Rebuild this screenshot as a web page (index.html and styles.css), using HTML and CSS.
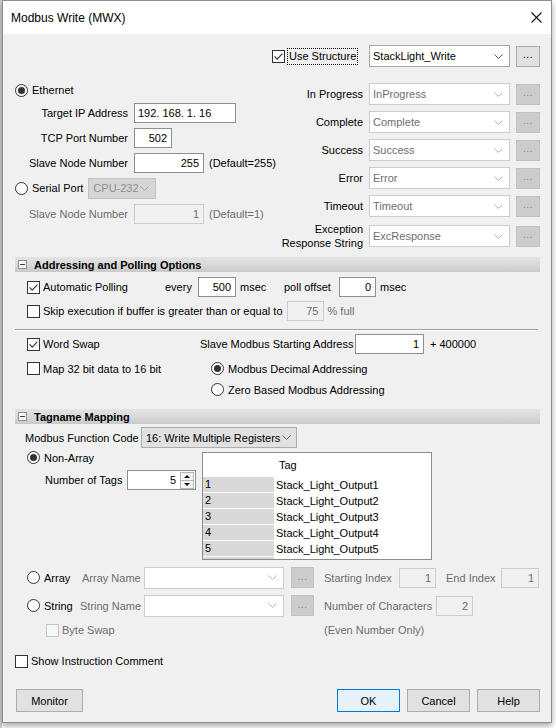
FILE: index.html
```html
<!DOCTYPE html>
<html>
<head>
<meta charset="utf-8">
<title>Modbus Write (MWX)</title>
<link rel="stylesheet" href="styles.css">
</head>
<body>
<div class="screen">
  <div class="window">
    <div class="titlebar">
      <span class="title">Modbus Write (MWX)</span>
      <svg class="close" width="11" height="11" viewBox="0 0 11 11"><path d="M0.5 0.5 L10.5 10.5 M10.5 0.5 L0.5 10.5" stroke="#111" stroke-width="1.1" fill="none"/></svg>
    </div>

    <div class="body">
      <!-- Use structure -->
      <div class="row use-row">
        <svg class="cb use-cb" width="13" height="13" viewBox="0 0 13 13"><rect x="0.5" y="0.5" width="12" height="12" fill="#fff" stroke="#333"/><path d="M2.6 6.4 5.2 9.1 10.4 3.6" fill="none" stroke="#333" stroke-width="1.1"/></svg>
        <span class="focus">Use Structure</span>
        <div class="combo en st push-right"><span>StackLight_Write</span><svg class="chev" width="9" height="5" viewBox="0 0 9 5"><path d="M0.5 0.5 4.5 4.5 8.5 0.5" fill="none" stroke="currentColor"/></svg></div>
        <div class="dots en">...</div>
      </div>

      <div class="cols">
        <div class="left">
          <div class="row eth">
            <svg class="rb" width="13" height="13" viewBox="0 0 13 13"><circle cx="6.5" cy="6.5" r="6" fill="#fff" stroke="#333"/><circle cx="6.5" cy="6.5" r="3.5" fill="#333"/></svg>
            <span class="rl">Ethernet</span>
          </div>
          <div class="row fld ip-row"><span class="lab">Target IP Address</span><div class="tb w102 la">192<i>.</i>168<i>.</i>1<i>.</i>16</div></div>
          <div class="row fld g5"><span class="lab">TCP Port Number</span><div class="tb w38">502</div></div>
          <div class="row fld g5"><span class="lab">Slave Node Number</span><div class="tb w70">255</div><span class="after">(Default=255)</span></div>
          <div class="row serial">
            <svg class="rb" width="13" height="13" viewBox="0 0 13 13"><circle cx="6.5" cy="6.5" r="6" fill="#fff" stroke="#333"/></svg>
            <span class="rl">Serial Port</span>
            <div class="dd dis w68"><span>CPU-232</span><svg class="chev" width="9" height="5" viewBox="0 0 9 5"><path d="M0.5 0.5 4.5 4.5 8.5 0.5" fill="none" stroke="currentColor"/></svg></div>
          </div>
          <div class="row fld g5 dim slave2"><span class="lab">Slave Node Number</span><div class="tb dis w70">1</div><span class="after">(Default=1)</span></div>
        </div>

        <div class="right">
          <div class="row st-row first"><span class="slab"><span>In Progress</span></span><div class="combo dis st"><span>InProgress</span><svg class="chev" width="9" height="5" viewBox="0 0 9 5"><path d="M0.5 0.5 4.5 4.5 8.5 0.5" fill="none" stroke="currentColor"/></svg></div><div class="dots dis">...</div></div>
          <div class="row st-row"><span class="slab"><span>Complete</span></span><div class="combo dis st"><span>Complete</span><svg class="chev" width="9" height="5" viewBox="0 0 9 5"><path d="M0.5 0.5 4.5 4.5 8.5 0.5" fill="none" stroke="currentColor"/></svg></div><div class="dots dis">...</div></div>
          <div class="row st-row"><span class="slab"><span>Success</span></span><div class="combo dis st"><span>Success</span><svg class="chev" width="9" height="5" viewBox="0 0 9 5"><path d="M0.5 0.5 4.5 4.5 8.5 0.5" fill="none" stroke="currentColor"/></svg></div><div class="dots dis">...</div></div>
          <div class="row st-row"><span class="slab"><span>Error</span></span><div class="combo dis st"><span>Error</span><svg class="chev" width="9" height="5" viewBox="0 0 9 5"><path d="M0.5 0.5 4.5 4.5 8.5 0.5" fill="none" stroke="currentColor"/></svg></div><div class="dots dis">...</div></div>
          <div class="row st-row"><span class="slab"><span>Timeout</span></span><div class="combo dis st"><span>Timeout</span><svg class="chev" width="9" height="5" viewBox="0 0 9 5"><path d="M0.5 0.5 4.5 4.5 8.5 0.5" fill="none" stroke="currentColor"/></svg></div><div class="dots dis">...</div></div>
          <div class="row st-row exc"><span class="slab"><span class="two">Exception<br>Response String</span></span><div class="combo dis st"><span>ExcResponse</span><svg class="chev" width="9" height="5" viewBox="0 0 9 5"><path d="M0.5 0.5 4.5 4.5 8.5 0.5" fill="none" stroke="currentColor"/></svg></div><div class="dots dis">...</div></div>
        </div>
      </div>

      <!-- Addressing and Polling -->
      <div class="group-h h-addr"><span class="minus"></span><b>Addressing and Polling Options</b></div>

      <div class="row r20 poll">
        <svg class="cb ind" width="13" height="13" viewBox="0 0 13 13"><rect x="0.5" y="0.5" width="12" height="12" fill="#fff" stroke="#333"/><path d="M2.6 6.4 5.2 9.1 10.4 3.6" fill="none" stroke="#333" stroke-width="1.1"/></svg>
        <span class="cl w-ap">Automatic Polling</span>
        <span class="w-every">every</span>
        <div class="tb w38">500</div>
        <span class="ms">msec</span>
        <span class="w-po">poll offset</span>
        <div class="tb w37">0</div>
        <span class="ms2">msec</span>
      </div>
      <div class="row r20 skip">
        <svg class="cb ind" width="13" height="13" viewBox="0 0 13 13"><rect x="0.5" y="0.5" width="12" height="12" fill="#fff" stroke="#333"/></svg>
        <span class="cl">Skip execution if buffer is greater than or equal to</span>
        <div class="tb dis w37 buf">75</div>
        <span class="pct dimtxt">% full</span>
      </div>

      <div class="sep"></div>

      <div class="row r20 word">
        <svg class="cb ind" width="13" height="13" viewBox="0 0 13 13"><rect x="0.5" y="0.5" width="12" height="12" fill="#fff" stroke="#333"/><path d="M2.6 6.4 5.2 9.1 10.4 3.6" fill="none" stroke="#333" stroke-width="1.1"/></svg>
        <span class="cl w-ws">Word Swap</span>
        <span class="w-sm">Slave Modbus Starting Address</span>
        <div class="tb w69">1</div>
        <span class="plus">+ 400000</span>
      </div>
      <div class="addr-grid">
        <div class="row r21">
          <svg class="cb ind" width="13" height="13" viewBox="0 0 13 13"><rect x="0.5" y="0.5" width="12" height="12" fill="#fff" stroke="#333"/></svg>
          <span class="cl">Map 32 bit data to 16 bit</span>
        </div>
        <div class="radios">
          <div class="row r21">
            <svg class="rb" width="13" height="13" viewBox="0 0 13 13"><circle cx="6.5" cy="6.5" r="6" fill="#fff" stroke="#333"/><circle cx="6.5" cy="6.5" r="3.5" fill="#333"/></svg>
            <span class="rl">Modbus Decimal Addressing</span>
          </div>
          <div class="row r21">
            <svg class="rb" width="13" height="13" viewBox="0 0 13 13"><circle cx="6.5" cy="6.5" r="6" fill="#fff" stroke="#333"/></svg>
            <span class="rl">Zero Based Modbus Addressing</span>
          </div>
        </div>
      </div>

      <!-- Tagname Mapping -->
      <div class="group-h h-tag"><span class="minus"></span><b>Tagname Mapping</b></div>

      <div class="row fcode">
        <span class="fc-lab">Modbus Function Code</span>
        <div class="dd en w156"><span>16: Write Multiple Registers</span><svg class="chev" width="9" height="5" viewBox="0 0 9 5"><path d="M0.5 0.5 4.5 4.5 8.5 0.5" fill="none" stroke="currentColor"/></svg></div>
      </div>

      <div class="tag-area">
        <div class="tag-left">
          <div class="row nonarr">
            <svg class="rb ind" width="13" height="13" viewBox="0 0 13 13"><circle cx="6.5" cy="6.5" r="6" fill="#fff" stroke="#333"/><circle cx="6.5" cy="6.5" r="3.5" fill="#333"/></svg>
            <span class="rl">Non-Array</span>
          </div>
          <div class="row r20 ntags">
            <span class="nt-lab">Number of Tags</span>
            <div class="spin"><span class="val">5</span>
              <svg class="arrows" width="14" height="17" viewBox="0 0 14 17"><rect x="0.5" y="0.5" width="13" height="16" fill="#f4f4f4" stroke="#b5b5b5"/><line x1="0.5" y1="8.5" x2="13.5" y2="8.5" stroke="#b5b5b5"/><path d="M4 6 7 3 10 6Z" fill="#111"/><path d="M4 11 7 14 10 11Z" fill="#111"/></svg>
            </div>
          </div>
        </div>
        <div class="tagtable">
          <div class="th"><div class="c1"></div><div class="c2">Tag</div></div>
          <div class="tr"><div class="c1">1</div><div class="c2">Stack_Light_Output1</div></div>
          <div class="tr"><div class="c1">2</div><div class="c2">Stack_Light_Output2</div></div>
          <div class="tr"><div class="c1">3</div><div class="c2">Stack_Light_Output3</div></div>
          <div class="tr"><div class="c1">4</div><div class="c2">Stack_Light_Output4</div></div>
          <div class="tr"><div class="c1">5</div><div class="c2">Stack_Light_Output5</div></div>
          <div class="tail"><div class="c1"></div><div class="c2"></div></div>
        </div>
      </div>

      <div class="row r21 arr">
        <svg class="rb ind" width="13" height="13" viewBox="0 0 13 13"><circle cx="6.5" cy="6.5" r="6" fill="#fff" stroke="#333"/></svg>
        <span class="rl w-arr">Array</span>
        <span class="dimtxt w-an">Array Name</span>
        <div class="combo dis w140"><span></span><svg class="chev" width="9" height="5" viewBox="0 0 9 5"><path d="M0.5 0.5 4.5 4.5 8.5 0.5" fill="none" stroke="currentColor"/></svg></div>
        <div class="dots dis sm">...</div>
        <span class="dimtxt w-si">Starting Index</span>
        <div class="tb dis w37">1</div>
        <span class="dimtxt w-ei">End Index</span>
        <div class="tb dis w38">1</div>
      </div>
      <div class="row r21 str">
        <svg class="rb ind" width="13" height="13" viewBox="0 0 13 13"><circle cx="6.5" cy="6.5" r="6" fill="#fff" stroke="#333"/></svg>
        <span class="rl w-str">String</span>
        <span class="dimtxt w-sn">String Name</span>
        <div class="combo dis w140"><span></span><svg class="chev" width="9" height="5" viewBox="0 0 9 5"><path d="M0.5 0.5 4.5 4.5 8.5 0.5" fill="none" stroke="currentColor"/></svg></div>
        <div class="dots dis sm">...</div>
        <span class="dimtxt w-nc">Number of Characters</span>
        <div class="tb dis w37">2</div>
      </div>
      <div class="row r16 byte">
        <div class="bs-block">
          <svg class="cb" width="13" height="13" viewBox="0 0 13 13"><rect x="0.5" y="0.5" width="12" height="12" fill="#f7f7f7" stroke="#c4c4c4"/></svg>
          <span class="cl dimtxt">Byte Swap</span>
        </div>
        <span class="dimtxt">(Even Number Only)</span>
      </div>

      <div class="row r16 showc">
        <svg class="cb" width="13" height="13" viewBox="0 0 13 13"><rect x="0.5" y="0.5" width="12" height="12" fill="#fff" stroke="#333"/></svg>
        <span class="cl">Show Instruction Comment</span>
      </div>

      <div class="row btns">
        <div class="btn monitor">Monitor</div>
        <div class="btn ok">OK</div>
        <div class="btn">Cancel</div>
        <div class="btn">Help</div>
      </div>
    </div>
  </div>
</div>
</body>
</html>
```
FILE: styles.css
```css
* { box-sizing: border-box; }
html, body { margin: 0; padding: 0; }
body {
  width: 556px; height: 728px; overflow: hidden;
  background: #fff;
  font-family: "Liberation Sans", Arial, sans-serif;
  font-size: 11px; color: #000;
}
.screen {
  height: 728px;
  background: linear-gradient(to right, #cfcfcf 0, #cfcfcf 2px, #fff 2px);
}
.window {
  margin-left: 2px;
  width: 550px; height: 723px;
  border: 1px solid #8e8e8e;
  background: #f0f0f0;
  box-shadow: 0 3px 6px rgba(0,0,0,.35);
  display: flex; flex-direction: column;
}
.titlebar {
  flex: none; height: 33px; background: #fff;
  display: flex; align-items: center;
  padding: 0 9px 0 8px;
}
.title { font-size: 12px; }
.close { margin-left: auto; display: block; }

.body { padding: 11px 11px 0 12px; }

.row { display: flex; align-items: center; white-space: nowrap; }
.cb, .rb { display: block; flex: none; }
.ind { margin-left: 12px; }
.cl { margin-left: 3px; }
.rl { margin-left: 4px; }
.dimtxt, .dim { color: #6d6d6d; }

/* controls */
.tb {
  height: 20px; background: #fff; border: 1px solid #8f8f8f;
  display: flex; align-items: center; justify-content: flex-end;
  padding: 0 4px; flex: none;
}
.tb.la { justify-content: flex-start; padding-left: 3px; }
.tb i { font-style: normal; margin-right: 3px; }
.tb.dis { background: #f0f0f0; border-color: #cccccc; color: #6d6d6d; }
.w102 { width: 102px; } .w38 { width: 38px; } .w37 { width: 37px; }
.w70 { width: 70px; } .w69 { width: 69px; } .w68 { width: 68px; }
.w140 { width: 140px; } .w156 { width: 156px; }

.combo, .dd {
  height: 22px; display: flex; align-items: center; justify-content: space-between;
  padding: 0 6px 0 3px; border: 1px solid #a9a9a9; background: #fff; flex: none;
}
.combo.en { color: #000; }
.combo.en .chev { color: #5a5a5a; }
.combo.dis { border-color: #cccccc; color: #6d6d6d; }
.combo.dis .chev { color: #b4b4b4; }
.chev { display: block; flex: none; }
.st { width: 141px; }
.push-right { margin-left: auto; }
.dd { height: 21px; }
.dd.en { background: #e1e1e1; border-color: #adadad; padding: 0 5px 0 4px; }
.dd.en .chev { color: #6a6a6a; }
.dd.dis { background: #d6d6d6; border-color: #c4c4c4; color: #8f8f8f; padding: 0 6px 0 4px; margin-left: 5px; }
.dd.dis .chev { color: #a8a8a8; }

.dots {
  width: 24px; height: 21px; margin-left: 6px; flex: none;
  display: flex; align-items: center; justify-content: center;
  padding-bottom: 3px; font-size: 10px; letter-spacing: 0.5px;
}
.dots.en { background: #e1e1e1; border: 1px solid #adadad; color: #000; }
.dots.dis { background: #cccccc; border: 1px solid #c2c2c2; color: #8a8a8a; }
.dots.sm { width: 23px; height: 21px; margin-left: 7px; }

/* use structure */
.use-row { height: 22px; }
.use-cb { margin-left: 257px; }
.focus { margin-left: 2px; border: 1px dotted #000; padding: 1px 1px; line-height: 13px; }

/* top columns */
.cols { display: flex; margin-top: 12px; }
.left { width: 275px; flex: none; }
.right { width: 250px; flex: none; }
.eth { height: 22px; }
.fld { height: 20px; }
.ip-row { margin-top: 2px; }
.g5 { margin-top: 5px; }
.lab { width: 113px; text-align: right; margin-right: 6px; flex: none; }
.after { margin-left: 5px; }
.serial { height: 22px; margin-top: 4px; }
.slave2 { margin-top: 5px; }

.st-row { height: 22px; margin-top: 6px; }
.st-row.first { margin-top: 4px; }
.st-row.exc { height: 28px; margin-top: 5px; }
.slab { width: 73px; margin-right: 6px; flex: none; display: flex; justify-content: flex-end; }
.slab .two { text-align: right; line-height: 14px; }

/* group headers */
.group-h {
  height: 15px; display: flex; align-items: center;
  background: linear-gradient(to bottom, #e4e4e4 0%, #d6d6d6 60%, #c9c9c9 100%);
  padding-left: 3px; width: 525px;
}
.group-h b { margin-left: 7px; font-weight: bold; }
.minus {
  width: 9px; height: 9px; border: 1px solid #8f8f8f; background: #f8f8f8;
  display: flex; align-items: center; justify-content: center; flex: none;
}
.minus::after { content: ""; width: 5px; height: 1px; background: #444; }
.h-addr { margin-top: 7px; }
.h-tag { margin-top: 9px; }

.r20 { height: 20px; }
.r21 { height: 21px; }
.r16 { height: 16px; }
.poll { margin-top: 5px; }
.w-ap { width: 122px; }
.w-every { width: 33px; }
.ms { margin-left: 4px; width: 44px; }
.w-po { width: 55px; }
.ms2 { margin-left: 4px; }
.skip { margin-top: 4px; }
.buf { margin-left: 4px; }
.pct { margin-left: 4px; }

.sep { margin-top: 8px; width: 523px; height: 2px; border-top: 1px solid #a0a0a0; border-bottom: 1px solid #fff; }

.word { margin-top: 3px; }
.w-ws { width: 157px; }
.w-sm { width: 155px; }
.plus { margin-left: 6px; }

.addr-grid { display: flex; margin-top: 4px; }
.addr-grid > .row { width: 196px; flex: none; align-self: flex-start; }
.radios { display: flex; flex-direction: column; }

.fcode { height: 21px; margin-top: 3px; }
.fc-lab { margin-left: 10px; width: 116px; }

.tag-area { display: flex; margin-top: 3px; }
.tag-left { width: 187px; flex: none; }
.nonarr { height: 13px; }
.ntags { margin-top: 6px; }
.nt-lab { margin-left: 30px; width: 82px; }
.spin {
  width: 69px; height: 20px; background: #fff; border: 1px solid #8f8f8f;
  display: flex; align-items: center; justify-content: flex-end; padding-right: 1px;
}
.spin .val { margin-right: 4px; }
.arrows { display: block; }

.tagtable {
  margin-top: 1px; width: 230px; height: 108px;
  border: 1px solid #8c8c8c; background: #fff;
  display: flex; flex-direction: column;
}
.th, .tr, .tail { display: flex; }
.th { height: 24px; align-items: center; }
.th .c2 { padding-left: 5px; }
.c1 { width: 71px; flex: none; padding-left: 2px; }
.c2 { flex: 1; padding-left: 2px; }
.tr { height: 16px; }
.tr .c1 { background: #d8d8d8; border-bottom: 1px solid #fff; line-height: 15px; }
.tr .c2 { line-height: 16px; }
.tail { flex: 1; }
.tail .c1 { background: #d8d8d8; }

.arr { margin-top: 7px; }
.w-arr { width: 38px; }
.w-an { width: 62px; }
.w-si { margin-left: 10px; width: 75px; }
.w-ei { margin-left: 10px; width: 55px; }
.str { margin-top: 7px; }
.w-str { width: 36px; }
.w-sn { width: 64px; }
.w-nc { margin-left: 10px; width: 112px; }
.byte { margin-top: 6px; }
.bs-block { display: flex; align-items: center; width: 309px; padding-left: 31px; flex: none; }

.showc { margin-top: 15px; }

.btns { margin-top: 20px; height: 23px; }
.btn {
  height: 23px; width: 63px; margin-left: 7px;
  display: flex; align-items: center; justify-content: center;
  background: #e1e1e1; border: 1px solid #adadad; flex: none;
}
.btn.monitor { width: 67px; margin-left: 1px; margin-right: auto; }
.btn.ok { background: #e5f1fb; border-color: #0078d7; }
```
